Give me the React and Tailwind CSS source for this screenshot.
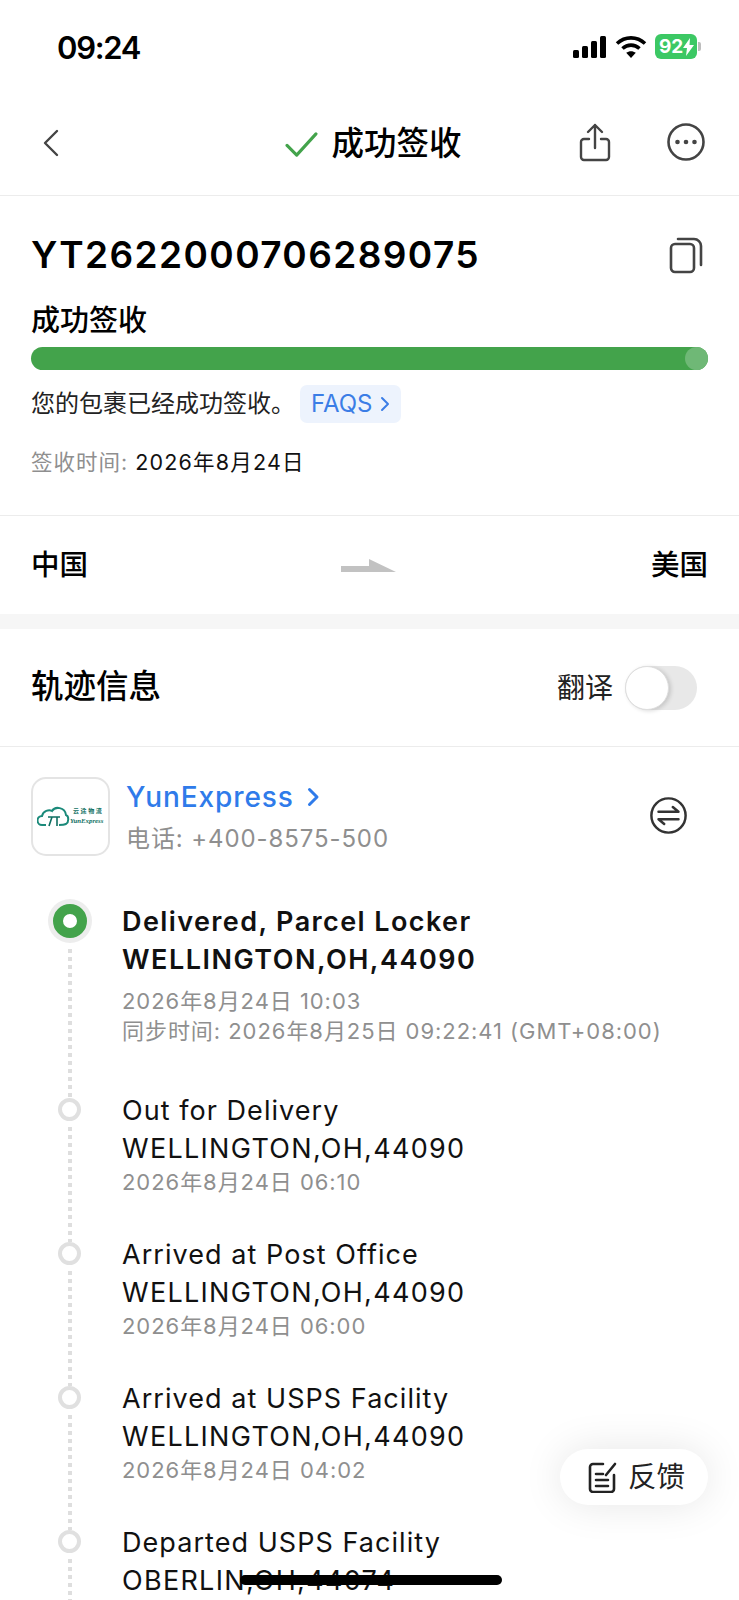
import React from 'react';

const FONT = "font-['Inter','Noto_Sans_CJK_SC',sans-serif]";

const events = [
  { title: 'Out for Delivery', place: 'WELLINGTON,OH,44090', time: '2026年8月24日 06:10' },
  { title: 'Arrived at Post Office', place: 'WELLINGTON,OH,44090', time: '2026年8月24日 06:00' },
  { title: 'Arrived at USPS Facility', place: 'WELLINGTON,OH,44090', time: '2026年8月24日 04:02' },
  { title: 'Departed USPS Facility', place: 'OBERLIN,OH,44074' },
];

const DottedLine = () => (
  <div className="flex-1 w-[4px] mt-[6px] bg-[repeating-linear-gradient(to_bottom,#dedede_0,#dedede_4px,transparent_4px,transparent_8px)]" />
);

const StatusBar = () => (
  <div className="h-[98px] pl-[57px] pr-[38px] pt-[30px] flex justify-between items-start">
    <span className="text-[31px] leading-[36px] font-semibold tracking-[-1.3px] text-black">09:24</span>
    <div className="flex items-center gap-[8px] mt-[4px]">
      <svg width="34" height="22" viewBox="0 0 34 22" fill="#000">
        <rect x="0" y="14" width="6" height="8" rx="1.5" />
        <rect x="9" y="10" width="6" height="12" rx="1.5" />
        <rect x="18" y="5" width="6" height="17" rx="1.5" />
        <rect x="27" y="0" width="6" height="22" rx="1.5" />
      </svg>
      <svg width="32" height="24" viewBox="0 0 32 24" fill="none" stroke="#000" strokeWidth="3.6">
        <path d="M2 8.5C10 1 22 1 30 8.5" />
        <path d="M7.5 13.5C12.5 9 19.5 9 24.5 13.5" />
        <path d="M16 23l-4.8-5.2c2.8-2.2 6.8-2.2 9.6 0z" fill="#000" stroke="none" />
      </svg>
      <div className="flex items-center">
        <div className="w-[42px] h-[25px] rounded-[6px] bg-[#3cc864] flex items-center pl-[4px] text-white text-[19px] font-bold leading-none">
          92
          <svg width="11" height="18" viewBox="0 0 11 18" fill="#fff"><path d="M7 0L0 10h4l-1 8 8-11H6.5z" /></svg>
        </div>
        <div className="w-[3px] h-[9px] ml-[1px] rounded-r-[2px] bg-[#bdbdbd]" />
      </div>
    </div>
  </div>
);

const NavBar = () => (
  <div className="relative h-[98px] border-b border-[#ececec] flex items-center justify-center">
    <svg className="absolute left-[40px] top-[30px]" width="20" height="30" viewBox="0 0 20 30" fill="none" stroke="#444" strokeWidth="2.4" strokeLinecap="round" strokeLinejoin="round">
      <path d="M17 3L5 15l12 12" />
    </svg>
    <div className="flex items-center gap-[13px] -mt-[5px] ml-[8px]">
      <svg width="33" height="27" viewBox="0 0 34 28" fill="none" stroke="#43a34b" strokeWidth="3.2" strokeLinecap="round" strokeLinejoin="round">
        <path d="M2 15l10 10L32 3" />
      </svg>
      <span className="text-[32.5px] leading-[40px] font-medium text-black">成功签收</span>
    </div>
    <svg className="absolute left-[579px] top-[24px]" width="32" height="40" viewBox="0 0 32 40" fill="none" stroke="#444" strokeWidth="2.4" strokeLinecap="round" strokeLinejoin="round">
      <path d="M16 26V3M9 10l7-7 7 7" />
      <path d="M10 17H5a3 3 0 0 0-3 3v15a3 3 0 0 0 3 3h22a3 3 0 0 0 3-3V20a3 3 0 0 0-3-3h-5" />
    </svg>
    <svg className="absolute left-[666px] top-[24px]" width="40" height="40" viewBox="0 0 40 40" fill="none">
      <circle cx="20" cy="20" r="17.5" stroke="#444" strokeWidth="2.6" />
      <circle cx="11.5" cy="20" r="2.3" fill="#444" />
      <circle cx="20" cy="20" r="2.3" fill="#444" />
      <circle cx="28.5" cy="20" r="2.3" fill="#444" />
    </svg>
  </div>
);

const SummaryCard = () => (
  <div className="px-[31px] border-b border-[#ececec] h-[320px] pt-[35px]">
    <div className="flex justify-between items-center">
      <span className="text-[37px] leading-[48px] font-semibold tracking-[1.4px] text-black">YT2622000706289075</span>
      <svg className="mr-[5px]" width="34" height="38" viewBox="0 0 34 38" fill="none" stroke="#444" strokeWidth="2.6" strokeLinecap="round">
        <rect x="2" y="8" width="23" height="28" rx="4" />
        <path d="M9 3h16a7 7 0 0 1 7 7v19" />
      </svg>
    </div>
    <div className="mt-[23px] text-[29px] leading-[38px] font-medium text-black">成功签收</div>
    <div className="mt-[7px] h-[23px] rounded-full bg-[#43a34b] flex justify-end">
      <div className="w-[23px] h-[23px] rounded-full bg-[#6fb876]" />
    </div>
    <div className="mt-[15px] flex items-center">
      <span className="text-[24px] leading-[38px] text-[#222]">您的包裹已经成功签收。</span>
      <div className="ml-[5px] h-[38px] px-[11px] rounded-[7px] bg-[#edf3fd] flex items-center gap-[8px] text-[24px] text-[#3b7de6]">
        FAQS
        <svg width="10" height="16" viewBox="0 0 10 16" fill="none" stroke="#3b7de6" strokeWidth="2" strokeLinecap="round" strokeLinejoin="round"><path d="M2 2l6 6-6 6" /></svg>
      </div>
    </div>
    <div className="mt-[24px] flex items-center text-[21.5px] leading-[30px]">
      <span className="tracking-[1px] text-[#8f8f8f]">签收时间:</span>
      <span className="ml-[7px] tracking-[1.2px] text-[#111]">2026年8月24日</span>
    </div>
  </div>
);

const RouteRow = () => (
  <div className="h-[98px] px-[31px] flex justify-between items-center relative">
    <span className="text-[28.5px] font-medium text-black">中国</span>
    <svg className="absolute left-[340px] top-[43px]" width="58" height="14" viewBox="0 0 58 14" fill="#c2c2c2">
      <path d="M1 7h28V0l27 13H1z" />
    </svg>
    <span className="text-[28.5px] font-medium text-black">美国</span>
  </div>
);

const TrackHeader = () => (
  <div className="h-[118px] px-[31px] pr-[42px] border-b border-[#ececec] flex justify-between items-center">
    <span className="text-[32.5px] font-medium text-black">轨迹信息</span>
    <div className="flex items-center gap-[12px]">
      <span className="text-[28px] text-[#222]">翻译</span>
      <div className="w-[72px] h-[44px] rounded-full bg-[#e8e8e8] relative">
        <div className="absolute left-0 top-0 w-[44px] h-[44px] rounded-full bg-white border border-[#dedede] shadow-[2px_1px_4px_rgba(0,0,0,0.15)]" />
      </div>
    </div>
  </div>
);

const Carrier = () => (
  <div className="relative h-[112px] pl-[31px] pt-[30px] flex">
    <div className="w-[79px] h-[79px] rounded-[15px] border-2 border-[#e4e4e4] flex items-center justify-center">
      <svg width="68" height="24" viewBox="0 0 68 24" fill="none">
        <path d="M9 20H5a4 4 0 0 1 0-9c1-5 7-7 10-5 3-5 13-4 14 4 3 1 3 7 0 9-2 1-3 1-7 1" stroke="#1b8a7a" strokeWidth="2" />
        <path d="M11 12h12M15 12l-3 9M20 12v9" stroke="#0f6f62" strokeWidth="1.6" />
        <text x="36" y="8" fontSize="6" letterSpacing="1.6" fill="#0f6f62" fontWeight="700">云途物流</text>
        <text x="33" y="18" fontSize="6.8" fill="#0f6f62" fontWeight="700" fontStyle="italic" fontFamily="'Liberation Serif',serif">YunExpress</text>
      </svg>
    </div>
    <div className="ml-[16px]">
      <div className="flex items-center gap-[13px] h-[40px]">
        <span className="text-[28px] font-medium tracking-[0.9px] text-[#2f7bea]">YunExpress</span>
        <svg width="13" height="20" viewBox="0 0 13 20" fill="none" stroke="#2f7bea" strokeWidth="3" strokeLinecap="round" strokeLinejoin="round"><path d="M2.5 2.5L10 10l-7.5 7.5" /></svg>
      </div>
      <div className="mt-[5px] text-[24px] leading-[34px] tracking-[0.9px] text-[#8f8f8f]">电话: +400-8575-500</div>
    </div>
    <svg className="absolute left-[649px] top-[49px]" width="39" height="39" viewBox="0 0 41 41" fill="none" stroke="#333" strokeWidth="2.6" strokeLinecap="round" strokeLinejoin="round">
      <circle cx="20.5" cy="20.5" r="18" />
      <path d="M10 16.5h21l-6-5M31 24.5H10l6 5" />
    </svg>
  </div>
);

const Timeline = () => (
  <div className="mt-[40px]">
    <div className="flex h-[199px]">
      <div className="w-[122px] pl-[48px] flex flex-col items-start shrink-0">
        <div className="w-[44px] h-[44px] rounded-full bg-[#ededed] flex items-center justify-center shrink-0">
          <div className="w-[34px] h-[34px] rounded-full border-[10px] border-[#43a34b] bg-white" />
        </div>
        <div className="flex-1 flex ml-[20px]"><DottedLine /></div>
      </div>
      <div className="mt-[4px]">
        <div className="text-[27px] leading-[38px] font-semibold tracking-[1.4px] text-[#111]">Delivered, Parcel Locker</div>
        <div className="text-[27px] leading-[38px] font-semibold tracking-[1.5px] text-[#111]">WELLINGTON,OH,44090</div>
        <div className="mt-[7px] text-[22px] leading-[30px] tracking-[0.95px] text-[#8f8f8f]">2026年8月24日 10:03</div>
        <div className="text-[22px] leading-[30px] tracking-[0.95px] text-[#8f8f8f] whitespace-nowrap">同步时间: 2026年8月25日 09:22:41 (GMT+08:00)</div>
      </div>
    </div>
    {events.map((ev) => (
      <div key={ev.title} className="flex h-[144px]">
        <div className="w-[122px] pl-[58px] flex flex-col items-start shrink-0">
          <div className="w-[23px] h-[23px] rounded-full border-4 border-[#e0e0e0] bg-white shrink-0" />
          <div className="flex-1 flex ml-[10px]"><DottedLine /></div>
        </div>
        <div className="-mt-[6px]">
          <div className="text-[27px] leading-[38px] tracking-[1.05px] text-[#111]">{ev.title}</div>
          <div className="text-[27px] leading-[38px] tracking-[1.3px] text-[#111]">{ev.place}</div>
          {ev.time && <div className="-mt-[1px] text-[22px] leading-[30px] tracking-[0.95px] text-[#8f8f8f]">{ev.time}</div>}
        </div>
      </div>
    ))}
  </div>
);

export default function App() {
  return (
    <div className={`${FONT} relative w-[739px] h-[1600px] overflow-hidden bg-white`}>
      <StatusBar />
      <NavBar />
      <SummaryCard />
      <RouteRow />
      <div className="h-[15px] bg-[#f6f6f6]" />
      <TrackHeader />
      <Carrier />
      <Timeline />

      {/* floating feedback button */}
      <div className="absolute left-[560px] top-[1449px] w-[148px] h-[56px] pl-[5px] rounded-full bg-white shadow-[0_0_40px_rgba(0,0,0,0.1)] flex items-center justify-center gap-[10px]">
        <svg width="30" height="32" viewBox="0 0 30 32" fill="none" stroke="#222" strokeWidth="2.6" strokeLinecap="round">
          <path d="M15 3H5a3 3 0 0 0-3 3v22a3 3 0 0 0 3 3h18a3 3 0 0 0 3-3V14" />
          <path d="M8 13h7M8 19h12M8 25h12M18 14l9-11" />
        </svg>
        <span className="text-[28.5px] text-[#222]">反馈</span>
      </div>

      {/* home indicator */}
      <div className="absolute left-[240px] top-[1575px] w-[262px] h-[10px] rounded-full bg-black" />
    </div>
  );
}
